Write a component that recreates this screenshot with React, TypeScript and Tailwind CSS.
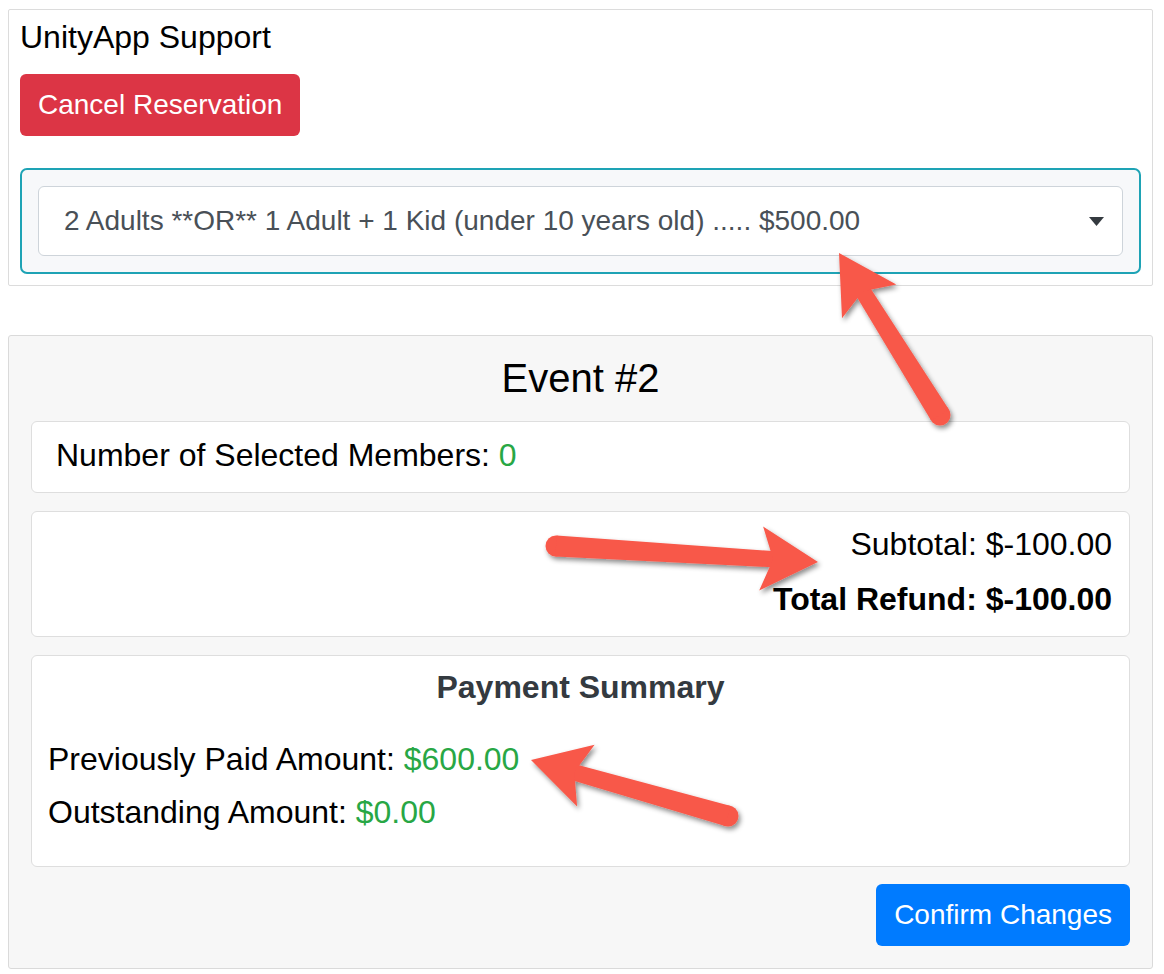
import React from "react";

type Pt = [number, number];

function Arrow({ t, p }: { t: Pt; p: Pt }) {
  const dx = p[0] - t[0];
  const dy = p[1] - t[1];
  const len = Math.hypot(dx, dy);
  const ux = dx / len;
  const uy = dy / len;
  const nx = -uy;
  const ny = ux;
  const H = 57;
  const W = 32;
  const notch = 45;
  const wt = 10.5;
  const wh = 8;
  const B: Pt = [p[0] - ux * H, p[1] - uy * H];
  const N: Pt = [p[0] - ux * notch, p[1] - uy * notch];
  const J: Pt = [p[0] - ux * (notch - 6), p[1] - uy * (notch - 6)];
  const head = [
    p,
    [B[0] + nx * W, B[1] + ny * W],
    N,
    [B[0] - nx * W, B[1] - ny * W],
  ]
    .map((q) => `${q[0].toFixed(1)},${q[1].toFixed(1)}`)
    .join(" ");
  const shaft = [
    [t[0] + nx * wt, t[1] + ny * wt],
    [J[0] + nx * wh, J[1] + ny * wh],
    [J[0] - nx * wh, J[1] - ny * wh],
    [t[0] - nx * wt, t[1] - ny * wt],
  ]
    .map((q) => `${q[0].toFixed(1)},${q[1].toFixed(1)}`)
    .join(" ");
  return (
    <g filter="url(#arrowShadow)" fill="#f8584a">
      <circle cx={t[0]} cy={t[1]} r={wt} />
      <polygon points={shaft} />
      <polygon points={head} strokeLinejoin="round" />
    </g>
  );
}

export default function App() {
  return (
    <div className="relative w-[1164px] min-h-[974px] bg-white font-['Liberation_Sans',Arial,Helvetica,sans-serif] text-black">
      <div className="flex flex-col">
        {/* Top card */}
        <div className="ml-[8px] mt-[9px] w-[1145px] border border-[#dcdcdc] rounded-[2px] bg-white pt-[9px] px-[11px] pb-[11px] flex flex-col">
          <div className="text-[32px] leading-[36px]">UnityApp Support</div>
          <button className="mt-[19px] self-start h-[62px] px-[18px] rounded-[6px] bg-[#dc3545] text-white text-[28px] leading-[62px]">
            Cancel Reservation
          </button>
          <div className="mt-[32px] border-2 border-[#1ea3b5] rounded-[7px] bg-[#f7f8fa] p-[16px]">
            <div className="h-[70px] border border-[#ced4da] rounded-[6px] bg-white flex items-center justify-between pl-[25px] pr-[18px] text-[28px] text-[#495057]">
              <span>2 Adults **OR** 1 Adult + 1 Kid (under 10 years old) ..... $500.00</span>
              <svg width="15" height="9" viewBox="0 0 15 9">
                <path d="M0 0 L15 0 L7.5 9 Z" fill="#343a40" />
              </svg>
            </div>
          </div>
        </div>

        {/* Event card */}
        <div className="ml-[8px] mt-[49px] w-[1145px] border border-[#dadada] rounded-[3px] bg-[#f7f7f7] px-[22px] pt-[18px] pb-[22px] flex flex-col">
          <div className="text-[40px] leading-[48px] text-center">Event #2</div>

          <div className="mt-[19px] border border-[#dedede] rounded-[6px] bg-white pl-[24px] pt-[14px] pb-[18px] text-[32px] leading-[38px]">
            Number of Selected Members: <span className="text-[#28a745]">0</span>
          </div>

          <div className="mt-[18px] border border-[#dedede] rounded-[6px] bg-white pr-[17px] pt-[13px] pb-[18px] text-[32px] leading-[38px] text-right">
            <div>Subtotal: $-100.00</div>
            <div className="mt-[17px] font-bold">Total Refund: $-100.00</div>
          </div>

          <div className="mt-[18px] border border-[#dedede] rounded-[6px] bg-white px-[16px] pt-[12px] pb-[35px] text-[32px] leading-[38px]">
            <div className="text-center font-bold text-[#343a40]">Payment Summary</div>
            <div className="mt-[34px]">
              Previously Paid Amount: <span className="text-[#28a745]">$600.00</span>
            </div>
            <div className="mt-[15px]">
              Outstanding Amount: <span className="text-[#28a745]">$0.00</span>
            </div>
          </div>

          <button className="mt-[17px] self-end h-[62px] px-[18px] rounded-[6px] bg-[#007bff] text-white text-[28px] leading-[62px]">
            Confirm Changes
          </button>
        </div>
      </div>

      {/* Annotation arrows */}
      <svg
        className="absolute left-0 top-0 pointer-events-none"
        width="1164"
        height="974"
        viewBox="0 0 1164 974"
      >
        <defs>
          <filter id="arrowShadow" x="-20%" y="-20%" width="140%" height="140%">
            <feDropShadow dx="2" dy="3" stdDeviation="2.5" floodColor="#000" floodOpacity="0.45" />
          </filter>
        </defs>
        <Arrow t={[940, 415]} p={[839, 253]} />
        <Arrow t={[556, 546]} p={[818, 562]} />
        <Arrow t={[728, 816]} p={[531, 760]} />
      </svg>
    </div>
  );
}
